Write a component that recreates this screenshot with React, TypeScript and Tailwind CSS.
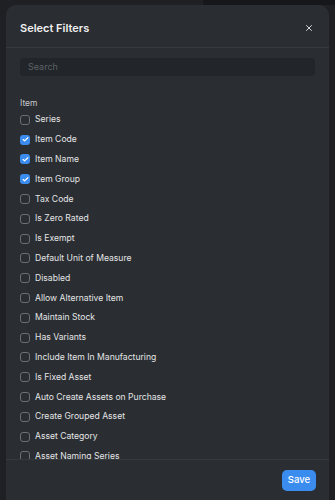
import { X, Check } from 'lucide-react'

const fields = [
  { label: 'Series', checked: false },
  { label: 'Item Code', checked: true },
  { label: 'Item Name', checked: true },
  { label: 'Item Group', checked: true },
  { label: 'Tax Code', checked: false },
  { label: 'Is Zero Rated', checked: false },
  { label: 'Is Exempt', checked: false },
  { label: 'Default Unit of Measure', checked: false },
  { label: 'Disabled', checked: false },
  { label: 'Allow Alternative Item', checked: false },
  { label: 'Maintain Stock', checked: false },
  { label: 'Has Variants', checked: false },
  { label: 'Include Item In Manufacturing', checked: false },
  { label: 'Is Fixed Asset', checked: false },
  { label: 'Auto Create Assets on Purchase', checked: false },
  { label: 'Create Grouped Asset', checked: false },
  { label: 'Asset Category', checked: false },
  { label: 'Asset Naming Series', checked: false },
]

export default function App() {
  return (
    <div className="relative w-[335px] h-[500px] overflow-hidden bg-[#1e2024] font-['Inter',sans-serif]">
      {/* backdrop strip */}
      <div className="flex h-[5px]">
        <div className="w-[203px]" />
        <div className="flex-1 bg-[#15171a]" />
      </div>
      <div className="mx-[6px] h-[495px] flex flex-col rounded-t-[10px] bg-[#2a2d31]">
        <div className="h-[43px] shrink-0 flex items-center justify-between pt-[5px] pl-[14px] pr-[15px] border-b border-[#363a3f]">
          <h1 className="text-[11px] font-semibold text-[#f0f0f0] leading-none">Select Filters</h1>
          <X className="w-[10px] h-[10px] text-[#e8e8e8] -mt-[2px]" strokeWidth={2.2} />
        </div>
        <div className="flex-1 overflow-hidden px-[14px] pt-[10px]">
          <div className="h-[18px] rounded-[4px] bg-[#222529] flex items-center px-[8px]">
            <span className="text-[9px] text-[#5d6168]">Search</span>
          </div>
          <div className="mt-[21px] text-[8.5px] text-[#c7c9cc] leading-[12px]">Item</div>
          <ul className="mt-[1px]">
            {fields.map((f, i) => (
              <li key={i} className="h-[19.8px] flex items-center gap-[5px]">
                {f.checked ? (
                  <span className="w-[10px] h-[10px] rounded-[3px] bg-[#3b8cef] flex items-center justify-center">
                    <Check className="w-[7px] h-[7px] text-white" strokeWidth={4} />
                  </span>
                ) : (
                  <span className="w-[10px] h-[10px] rounded-[3px] border border-[#6b6f75]" />
                )}
                <span className="text-[8.6px] text-[#e4e5e7]">{f.label}</span>
              </li>
            ))}
          </ul>
        </div>
        <div className="h-[41px] shrink-0 border-t border-[#363a3f] flex items-start justify-end pt-[10px] pr-[13px]">
          <button className="h-[21px] px-[6px] rounded-[5px] bg-[#3b8cef] text-white text-[9.5px] font-medium">Save</button>
        </div>
      </div>
    </div>
  )
}
